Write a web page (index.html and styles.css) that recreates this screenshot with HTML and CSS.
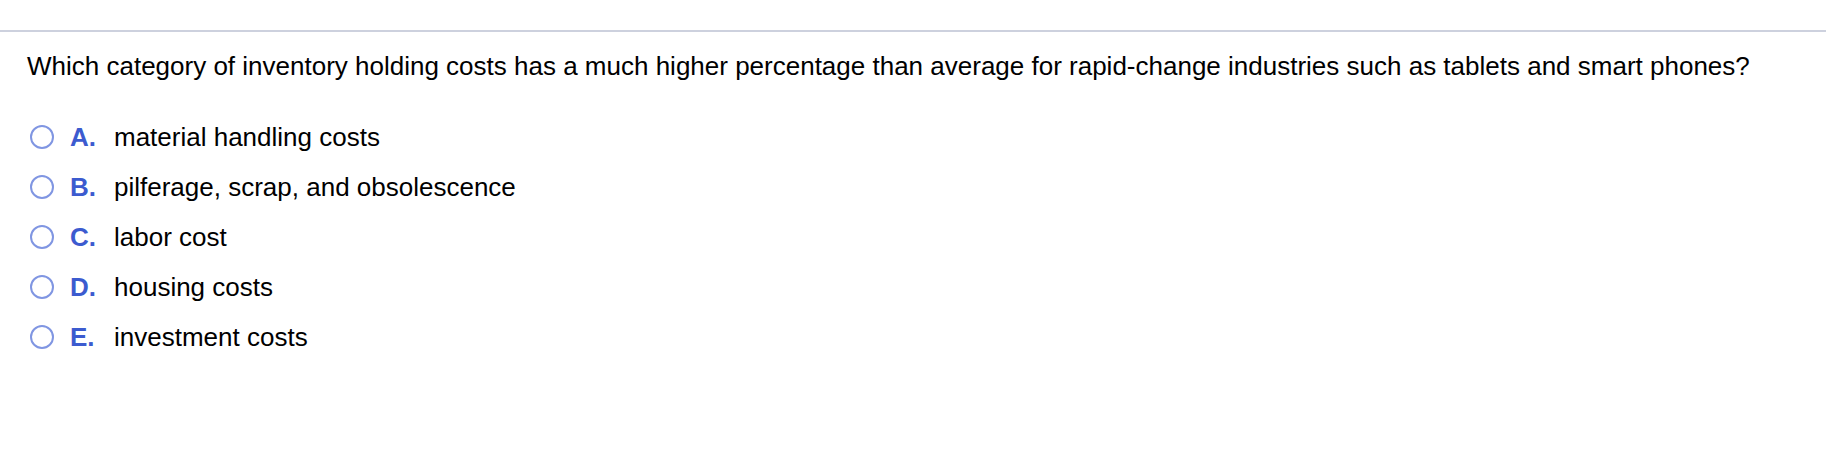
FILE: index.html
```html
<!DOCTYPE html>
<html>
<head>
<meta charset="utf-8">
<link rel="stylesheet" href="styles.css">
</head>
<body>
<div class="topbar"></div>
<div class="content">
  <p class="question">Which category of inventory holding costs has a much higher percentage than average for rapid-change industries such as tablets and smart phones?</p>
  <ul class="options">
    <li class="option"><span class="radio"></span><span class="letter">A.</span><span class="answer">material handling costs</span></li>
    <li class="option"><span class="radio"></span><span class="letter">B.</span><span class="answer">pilferage, scrap, and obsolescence</span></li>
    <li class="option"><span class="radio"></span><span class="letter">C.</span><span class="answer">labor cost</span></li>
    <li class="option"><span class="radio"></span><span class="letter">D.</span><span class="answer">housing costs</span></li>
    <li class="option"><span class="radio"></span><span class="letter">E.</span><span class="answer">investment costs</span></li>
  </ul>
</div>
</body>
</html>
```
FILE: styles.css
```css
html, body {
  margin: 0;
  padding: 0;
  background: #ffffff;
}
body {
  font-family: "Liberation Sans", Arial, Helvetica, sans-serif;
  color: #000000;
}
.topbar {
  height: 30px;
  border-bottom: 2px solid #cdd1de;
}
.content {
  padding: 18px 0 0 27px;
}
.question {
  margin: 0;
  font-size: 26px;
  line-height: 32px;
}
.options {
  list-style: none;
  margin: 30px 0 0 0;
  padding: 0;
}
.option {
  display: flex;
  align-items: center;
  height: 50px;
  font-size: 26px;
}
.radio {
  box-sizing: border-box;
  width: 24px;
  height: 24px;
  border: 2.5px solid #8096e2;
  border-radius: 50%;
  margin-left: 3px;
  flex: none;
}
.letter {
  width: 44px;
  margin-left: 16px;
  font-weight: bold;
  color: #3c5bcf;
  flex: none;
}
.answer {
  color: #000000;
}
```
